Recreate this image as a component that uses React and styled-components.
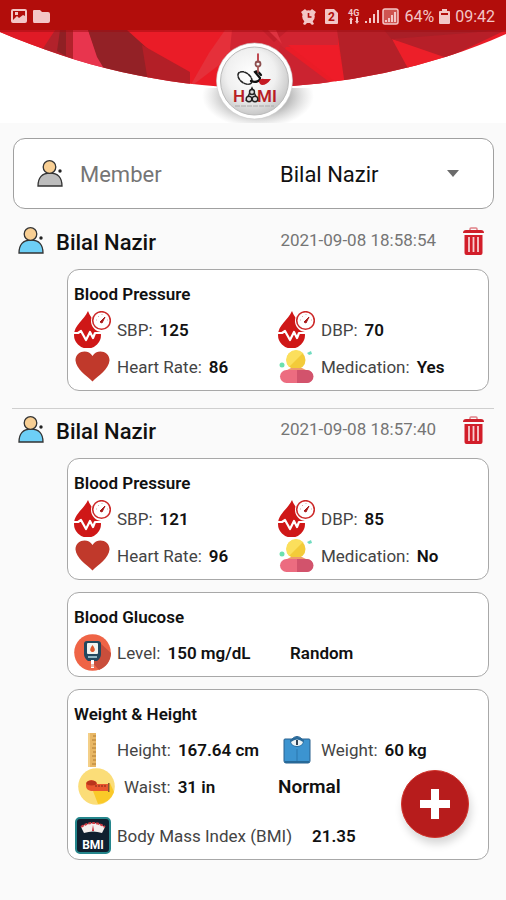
import React from "react";
import styled, { createGlobalStyle } from "styled-components";

const Global = createGlobalStyle`
  *, *::before, *::after { box-sizing: border-box; }
  html, body { margin: 0; background: #fafafa; }
  body { font-family: Roboto, "Liberation Sans", sans-serif; color: #111; }
  h2, h3, p, dl, dd { margin: 0; }
`;

const Screen = styled.div`
  min-height: 100vh;
  background: #fafafa;
`;

const StatusBar = styled.div`
  display: flex;
  align-items: center;
  justify-content: space-between;
  height: 30px;
  padding: 2px 11px 0;
  background: #b20d0b;
  color: #f3c6c6;
  font-size: 16px;
`;

const StatusGroup = styled.div`
  display: flex;
  align-items: center;
  gap: 5px;
`;

const Hero = styled.header`
  background: #fff;
  height: 93px;
  overflow: hidden;
  svg { display: block; width: 100%; height: 100%; }
`;

const Main = styled.main`
  padding: 15px 12px 38px;
`;

const MemberField = styled.div`
  display: flex;
  align-items: center;
  height: 71px;
  margin: 0 0 11px 1px;
  padding: 0 33px 0 23px;
  border: 1px solid #a0a0a0;
  border-radius: 12px;
  background: #fff;
`;

const MemberLabel = styled.label`
  flex: 1;
  padding: 2px 0 0 17px;
  color: #757575;
  font-size: 22px;
`;

const SelectWrap = styled.div`
  display: flex;
  align-items: center;
  width: 181px;
`;

const MemberSelect = styled.select`
  flex: 1;
  min-width: 0;
  appearance: none;
  border: 0;
  padding: 2px 0 0 1px;
  background: transparent;
  color: #111;
  font-family: inherit;
  font-size: 22px;
`;

const Record = styled.section`
  padding-bottom: 17px;
  & + & { border-top: 1px solid #cfcfcf; }
`;

const RecordHeader = styled.div`
  display: flex;
  align-items: flex-start;
  height: 49px;
  padding: 7px 10px 0 6px;
`;

const RecordName = styled.h2`
  flex: 1;
  padding: 3px 0 0 12px;
  font-size: 22px;
  line-height: 26px;
  font-weight: 500;
`;

const RecordTime = styled.time`
  padding: 1px 27px 0 0;
  color: #757575;
  font-size: 17px;
  line-height: 24px;
`;

const DeleteButton = styled.button`
  display: flex;
  padding: 0;
  border: 0;
  background: none;
  cursor: pointer;
`;

const Cards = styled.div`
  display: flex;
  flex-direction: column;
  gap: 12px;
  padding: 0 5px 0 55px;
`;

const Card = styled.article`
  padding: 12px 6px 5px;
  border: 1px solid #a8a8a8;
  border-radius: 12px;
  background: #fff;
`;

const CardTitle = styled.h3`
  margin-bottom: 5px;
  font-size: 17px;
  line-height: 24px;
  font-weight: 600;
`;

const Grid = styled.dl`
  display: grid;
  grid-template-columns: 1fr 1fr;
  grid-auto-rows: 37px;
`;

const Reading = styled.div`
  display: flex;
  align-items: center;
  padding-left: ${(p) => (p.$inset ? "4px" : "0")};
  white-space: nowrap;
  font-size: 17px;
`;

const IconSlot = styled.span`
  display: flex;
  justify-content: center;
  width: 37px;
  flex-shrink: 0;
`;

const ReadingLabel = styled.dt`
  padding-left: ${(p) => (p.$inset ? "9px" : "6px")};
  color: #444;
  font-weight: 400;
`;

const ReadingValue = styled.dd`
  padding-left: ${(p) => (p.$far ? "20px" : "7px")};
  font-weight: 600;
`;

const Verdict = styled.p`
  align-self: center;
  padding-left: ${(p) => (p.$large ? "0" : "12px")};
  font-size: ${(p) => (p.$large ? "19px" : "17px")};
  font-weight: 600;
`;

const BmiRow = styled.dl`
  display: flex;
  height: 37px;
  margin-top: 12px;
`;

const AddButton = styled.button`
  position: fixed;
  right: 37px;
  bottom: 62px;
  display: flex;
  align-items: center;
  justify-content: center;
  width: 68px;
  height: 68px;
  padding: 0;
  border: 1px solid #d0322a;
  border-radius: 50%;
  background: #b71c1c;
  box-shadow: 2px 6px 8px rgba(0, 0, 0, 0.16);
  cursor: pointer;
`;

const StatusLeft = () => (
  <svg width="40" height="16" viewBox="0 0 40 16" fill="#f3c6c6" aria-hidden="true">
    <path fillRule="evenodd" d="M2 1h12q2 0 2 2v10q0 2-2 2H2q-2 0-2-2V3q0-2 2-2zM2 3v9l4-4 2 2 4-3 2 1V3zm2 1h3v3H4z" />
    <path d="M23 2h6l2 2h6q2 0 2 2v7q0 2-2 2H23q-1 0-1-2V3q0-1 1-1z" />
  </svg>
);

const StatusSignals = () => (
  <svg width="98" height="17" viewBox="0 0 98 17" fill="#f3c6c6" aria-hidden="true">
    <path d="M0 4l4-3 2 2-4 4zM15 4l-4-3-2 2 4 4zM2 16l2-4h7l2 4-2 1-2-2H6l-2 2z" />
    <circle cx="7.5" cy="8.5" r="6.300" />
    <path d="M7.500 5v4h3" fill="none" stroke="#b20d0b" strokeWidth="1.6" />
    <path d="M25 1h8l4 4v10q0 1-1 1H25q-1 0-1-1V2q0-1 1-1z" />
    <text x="27" y="13" fontSize="12" fontWeight="700" fill="#b20d0b">2</text>
    <text x="47" y="8" fontSize="9" fontWeight="700">4G</text>
    <path d="M50 9l2 3h-1v4h-2v-4h-1zM56 16l-2-3h1V9h2v4h1z" />
    <path d="M64 13h2v2h-2zM68 10h2v5h-2zM72 6h2v9h-2zM76 2h2v13h-2z" />
    <rect x="82" y="1" width="15" height="15" rx="2" fill="#cf5450" stroke="#f3c6c6" strokeWidth="1.5" />
    <path d="M84 14v-2h2v2zM87 14v-4h2v4zM90 14V7h2v7zM93 14V4h2v10z" />
  </svg>
);

const Battery = () => (
  <svg width="11" height="15" viewBox="0 0 11 15" fill="#f3c6c6" aria-hidden="true">
    <path fillRule="evenodd" d="M3 0h5v2h2q1 0 1 1v11q0 1-1 1H1q-1 0-1-1V3q0-1 1-1h2zM2 4v2h7V4z" />
  </svg>
);

const HeroArt = () => (
  <svg viewBox="0 0 506 93" preserveAspectRatio="xMidYMin slice" role="img" aria-label="Hami">
    <defs>
      <clipPath id="band">
        <path d="M0 0V2C80 36 160 56 253 58C340 56 430 38 506 4V0z" />
      </clipPath>
      <radialGradient id="disc" cx=".45" cy=".4" r=".6">
        <stop offset="0" stopColor="#fff" />
        <stop offset=".6" stopColor="#f0f0f0" />
        <stop offset="1" stopColor="#c8c8c8" />
      </radialGradient>
      <radialGradient id="shade">
        <stop offset=".5" stopColor="#777" stopOpacity=".6" />
        <stop offset="1" stopColor="#aaa" stopOpacity="0" />
      </radialGradient>
      <clipPath id="below">
        <path d="M180 58h150v35H180z" />
      </clipPath>
    </defs>
    <g clipPath="url(#band)">
      <path fill="#ea1c27" d="M0 0h506v60H0z" />
      <path fill="#e01a26" d="M0 0h54L42 24 0 10z" />
      <path fill="#b2222b" d="M55 0h18v34L42 20z" />
      <path fill="#8f2024" d="M60 0h6v26l-9-5z" />
      <path fill="#e8354e" d="M73 0h15l8 22 12 24-35-10z" />
      <path fill="#932126" d="M88 0h39l21 19 1 36-40-8-12-20z" />
      <path fill="#b31f27" d="M142 15l48 27v16l-42-6z" />
      <path fill="#e5303a" d="M225 0h36l-12 12-60 46 20-35z" />
      <path fill="#d12431" d="M232 0h106v17h-52l-26 40-30-38z" />
      <path fill="#c21f2b" d="M262 0h26l-14 12z" />
      <path fill="#df3441" d="M282 14l-14-14h8z" />
      <path fill="#cb2330" d="M280 15l64 48-50 2-20-15z" />
      <path fill="#ee1c28" d="M288 15h50l8 40-9-2z" />
      <path fill="#b52028" d="M337 0h52l22 39-66 17z" />
      <path fill="#a91f27" d="M384 0h122L393 11z" />
      <path fill="#ed1f29" d="M392 9l55 18-37 15z" />
      <path fill="#b71f28" d="M392 9l114-9-59 28z" />
      <path fill="#9d0b10" opacity=".5" d="M0 0h506v2H0z" />
    </g>
    <g clipPath="url(#below)">
      <ellipse cx="258" cy="66" rx="56" ry="32" fill="url(#shade)" />
    </g>
    <circle cx="254.500" cy="51" r="38" fill="#fff" stroke="#ccc" strokeWidth=".6" />
    <circle cx="254.500" cy="51" r="34" fill="url(#disc)" stroke="#bbb" strokeWidth="1" />
    <g fill="none" strokeLinecap="round">
      <ellipse cx="245" cy="48" rx="8" ry="5" stroke="#222" strokeWidth="1.6" strokeDasharray="3 1.5" transform="rotate(38 245 48)" />
      <path d="M251 51c5 2 9 0 9-3l-5-6c3-2 4 1 6 3" stroke="#111" strokeWidth="2.200" />
      <path d="M258 24v8" stroke="#b31f28" strokeWidth="1.6" />
      <circle cx="258" cy="34" r="2.500" stroke="#8c5050" strokeWidth="1.8" />
      <path d="M258 37v5" stroke="#a55" strokeWidth="1.800" />
    </g>
    <path d="M259 51q2-3 5-2l7 0q-4 6-9 6-3-1-3-4z" fill="#c51b23" />
    <g fontFamily="Roboto, sans-serif" fontSize="17" fontWeight="600" fill="#b81d25">
      <text x="233" y="72">H</text>
      <text x="257" y="72">MI</text>
    </g>
    <g fill="#ddd" stroke="#222" strokeWidth="1.4">
      <path d="M246 71l6-13 6 13" fill="none" />
      <circle cx="252" cy="62" r="2.500" />
      <circle cx="249" cy="69" r="2.800" />
      <circle cx="255" cy="69" r="2.800" />
    </g>
    <path d="M235 76h39" stroke="#aaa" strokeWidth="1" strokeDasharray="5 1" />
  </svg>
);

const Person = ({ shirt }) => (
  <svg width="26" height="27" viewBox="0 0 26 27" stroke="#333" strokeWidth="1.3" aria-hidden="true">
    <path d="M1 26c0-8 4-13 12-13s12 5 12 13z" fill={shirt} />
    <circle cx="12.500" cy="7" r="6.300" fill="#f8cf94" />
    <circle cx="23" cy="11" r="1.700" fill="#222" stroke="none" />
  </svg>
);

const Trash = () => (
  <svg width="21" height="29" viewBox="0 0 21 29" aria-hidden="true">
    <path d="M7 3V2q0-1 1-1h5q1 0 1 1v1" fill="none" stroke="#e08087" strokeWidth="1.5" />
    <path d="M0 6q0-3 3-3h15q3 0 3 3z" fill="#cf1f2a" />
    <path d="M1.500 8h18v18q0 2-2 2h-14q-2 0-2-2z" fill="#d21e2a" />
    <path d="M6 10v15M10.500 10v15M15 10v15" stroke="#f8cdd0" strokeWidth="1.800" />
  </svg>
);

const Drop = () => (
  <svg width="37" height="37" viewBox="0 0 37 37" aria-hidden="true">
    <path d="M14 0C10 9 0 14 0 24a13 13 0 0 0 27 0C27 14 17 9 14 0z" fill="#cf1717" />
    <circle cx="28" cy="10" r="11" fill="#fff" />
    <circle cx="27.500" cy="9.500" r="8.800" fill="#fff" stroke="#cd2a2a" strokeWidth="1.600" />
    <path d="M28 3v1M22 9h1M33 9h1M24 5l1 1" stroke="#ddaaaa" />
    <path d="M26 11l5-5-3 6z" fill="#a61919" stroke="#a61919" />
    <path d="M0 22h4l3-2 5 9 4-8 3 6 2-5h7" fill="none" stroke="#fff" strokeWidth="2.200" strokeLinejoin="round" />
  </svg>
);

const Heart = () => (
  <svg width="35" height="31" viewBox="0 0 35 31" aria-hidden="true">
    <path d="M17.500 30.500C12 25 1 18 .5 9.500 0 0 13-3 17.500 5 22-3 35 0 34.500 9.500 34 18 23 25 17.500 30.500z" fill="#c0392b" />
  </svg>
);

const Pill = () => (
  <svg width="35" height="34" viewBox="0 0 35 34" aria-hidden="true">
    <circle cx="17" cy="10" r="9.500" fill="#f3cb39" />
    <path d="M10 17A9.500 9.500 0 1 1 24 3z" fill="#fbdf5c" />
    <rect x="1" y="20" width="33" height="13" rx="6.500" fill="#ec6c80" />
    <path d="M18 20h10a6.500 6.500 0 0 1 0 13H18z" fill="#d2536c" />
    <path d="M8 20h19l-4-2H12z" fill="#ee9a6c" />
    <circle cx="3" cy="15" r="2.500" fill="#6ce0ad" />
    <path d="M28 3l4-2 1 3-3 1z" fill="#70dbc0" />
  </svg>
);

const Glucometer = () => (
  <svg width="37" height="37" viewBox="0 0 37 37" aria-hidden="true">
    <circle cx="18.500" cy="18.500" r="18.300" fill="#ef6446" />
    <path d="M25 8l12 11c0 8-5 14-12 17l-8-9z" fill="#c94e3b" />
    <path d="M13 7h11q3 0 3 3v10q0 4-4 7h-9q-4-3-4-7V10q0-3 3-3z" fill="#23485e" />
    <rect x="13" y="9" width="11" height="11" rx="1" fill="#f3f4f0" />
    <path d="M18.500 11c-4 5-2 7 0 7s4-2 0-7z" fill="#de572c" />
    <path d="M14 23h9" stroke="#91b7c5" strokeWidth="2" />
    <path d="M17 26h3v8h-3z" fill="#fff" />
    <path d="M17 30h3v3h-3z" fill="#eab5a6" />
  </svg>
);

const Ruler = () => (
  <svg width="9" height="34" viewBox="0 0 9 34" aria-hidden="true">
    <path d="M0 0h8v34H0z" fill="#e8b765" />
    <path d="M0 0h2v34H0z" fill="#f4cf87" />
    <path d="M8 3H5M8 7H4M8 11H5M8 15H4M8 19H5M8 23H4M8 27H5M8 31H4" stroke="#b07b32" />
  </svg>
);

const Scale = () => (
  <svg width="28" height="29" viewBox="0 0 28 29" aria-hidden="true">
    <path d="M2 4h7q5-5 10 0h7q1 0 1 1v21q0 2-2 2H3q-2 0-2-2V5q0-1 1-1z" fill="#3c94d0" stroke="#28618e" />
    <path d="M7 5q7-6 14 0 0 6-7 7-7-1-7-7z" fill="#2b6a99" />
    <path d="M8 7q6-5 12 0-1 4-6 4-5 0-6-4z" fill="#eef4f5" />
    <path d="M14 5v5" stroke="#345" strokeWidth="2" />
    <path d="M14 14v14" stroke="#2b77ad" />
    <path d="M2 26h24v2H2z" fill="#276998" />
  </svg>
);

const Tape = () => (
  <svg width="37" height="37" viewBox="0 0 37 37" aria-hidden="true">
    <circle cx="18.500" cy="18.500" r="18.300" fill="#fbdd78" />
    <path d="M15 23l17-8 4 9a18 18 0 0 1-16 12z" fill="#fac928" />
    <path d="M8 15q5-6 11 0v1h12v7H13q-5-1-5-5z" fill="#e9562e" />
    <ellipse cx="13.500" cy="15" rx="5" ry="2.500" fill="#b9351c" />
    <path d="M18 17v2M21 17v2M24 17v2M27 17v2" stroke="#7c291b" />
    <path d="M30 15h1.500v9H30z" fill="#865434" />
  </svg>
);

const Bmi = () => (
  <svg width="36" height="37" viewBox="0 0 36 37" aria-hidden="true">
    <rect x="1" y="1" width="34" height="35" rx="4" fill="#10202f" stroke="#25868c" strokeWidth="2" />
    <path d="M6 10q12-8 24 0l-3 6q-9-3-18 0z" fill="#f5f0ee" />
    <path d="M6 10q12-8 24 0" fill="none" stroke="#cf3b43" strokeWidth="2" strokeDasharray="3 1" />
    <path d="M18 8l1 6h-2z" fill="#c5262e" />
    <text x="18" y="32" textAnchor="middle" fontSize="12" fontWeight="700" fill="#fff">BMI</text>
  </svg>
);

function Item({ icon, label, value, inset, far }) {
  return (
    <Reading $inset={inset}>
      <IconSlot>{icon}</IconSlot>
      <ReadingLabel $inset={inset}>{label}</ReadingLabel>
      <ReadingValue $far={far}>{value}</ReadingValue>
    </Reading>
  );
}

function PressureCard({ sbp, dbp, rate, medication }) {
  return (
    <Card>
      <CardTitle>Blood Pressure</CardTitle>
      <Grid>
        <Item icon={<Drop />} label="SBP:" value={sbp} />
        <Item icon={<Drop />} label="DBP:" value={dbp} />
        <Item icon={<Heart />} label="Heart Rate:" value={rate} />
        <Item icon={<Pill />} label="Medication:" value={medication} />
      </Grid>
    </Card>
  );
}

function MemberRecord({ time, children }) {
  return (
    <Record>
      <RecordHeader>
        <Person shirt="#6dcff6" />
        <RecordName>Bilal Nazir</RecordName>
        <RecordTime>{time}</RecordTime>
        <DeleteButton type="button" aria-label="Delete record">
          <Trash />
        </DeleteButton>
      </RecordHeader>
      <Cards>{children}</Cards>
    </Record>
  );
}

export default function App() {
  return (
    <Screen>
      <Global />
      <StatusBar>
        <StatusGroup>
          <StatusLeft />
        </StatusGroup>
        <StatusGroup>
          <StatusSignals />
          <span>64%</span>
          <Battery />
          <span>09:42</span>
        </StatusGroup>
      </StatusBar>
      <Hero>
        <HeroArt />
      </Hero>
      <Main>
        <MemberField>
          <Person shirt="#bdbdbd" />
          <MemberLabel htmlFor="member">Member</MemberLabel>
          <SelectWrap>
            <MemberSelect id="member">
              <option>Bilal Nazir</option>
            </MemberSelect>
            <svg width="14" height="7" viewBox="0 0 14 7" aria-hidden="true">
              <path d="M1 0h12L7 7z" fill="#6b6b6b" />
            </svg>
          </SelectWrap>
        </MemberField>

        <MemberRecord time="2021-09-08 18:58:54">
          <PressureCard sbp="125" dbp="70" rate="86" medication="Yes" />
        </MemberRecord>

        <MemberRecord time="2021-09-08 18:57:40">
          <PressureCard sbp="121" dbp="85" rate="96" medication="No" />
          <Card>
            <CardTitle>Blood Glucose</CardTitle>
            <Grid as="div">
              <Reading as="dl">
                <IconSlot><Glucometer /></IconSlot>
                <ReadingLabel>Level:</ReadingLabel>
                <ReadingValue>150 mg/dL</ReadingValue>
              </Reading>
              <Verdict>Random</Verdict>
            </Grid>
          </Card>
          <Card>
            <CardTitle>Weight &amp; Height</CardTitle>
            <Grid as="div">
              <Item icon={<Ruler />} label="Height:" value="167.64 cm" />
              <Item icon={<Scale />} label="Weight:" value="60 kg" />
              <Item icon={<Tape />} label="Waist:" value="31 in" inset />
              <Verdict $large>Normal</Verdict>
            </Grid>
            <BmiRow>
              <Item icon={<Bmi />} label="Body Mass Index (BMI)" value="21.35" far />
            </BmiRow>
          </Card>
        </MemberRecord>
      </Main>
      <AddButton type="button" aria-label="Add record">
        <svg width="30" height="30" viewBox="0 0 30 30" aria-hidden="true">
          <path d="M11 0h8v11h11v8H19v11h-8V19H0v-8h11z" fill="#fff" />
        </svg>
      </AddButton>
    </Screen>
  );
}
